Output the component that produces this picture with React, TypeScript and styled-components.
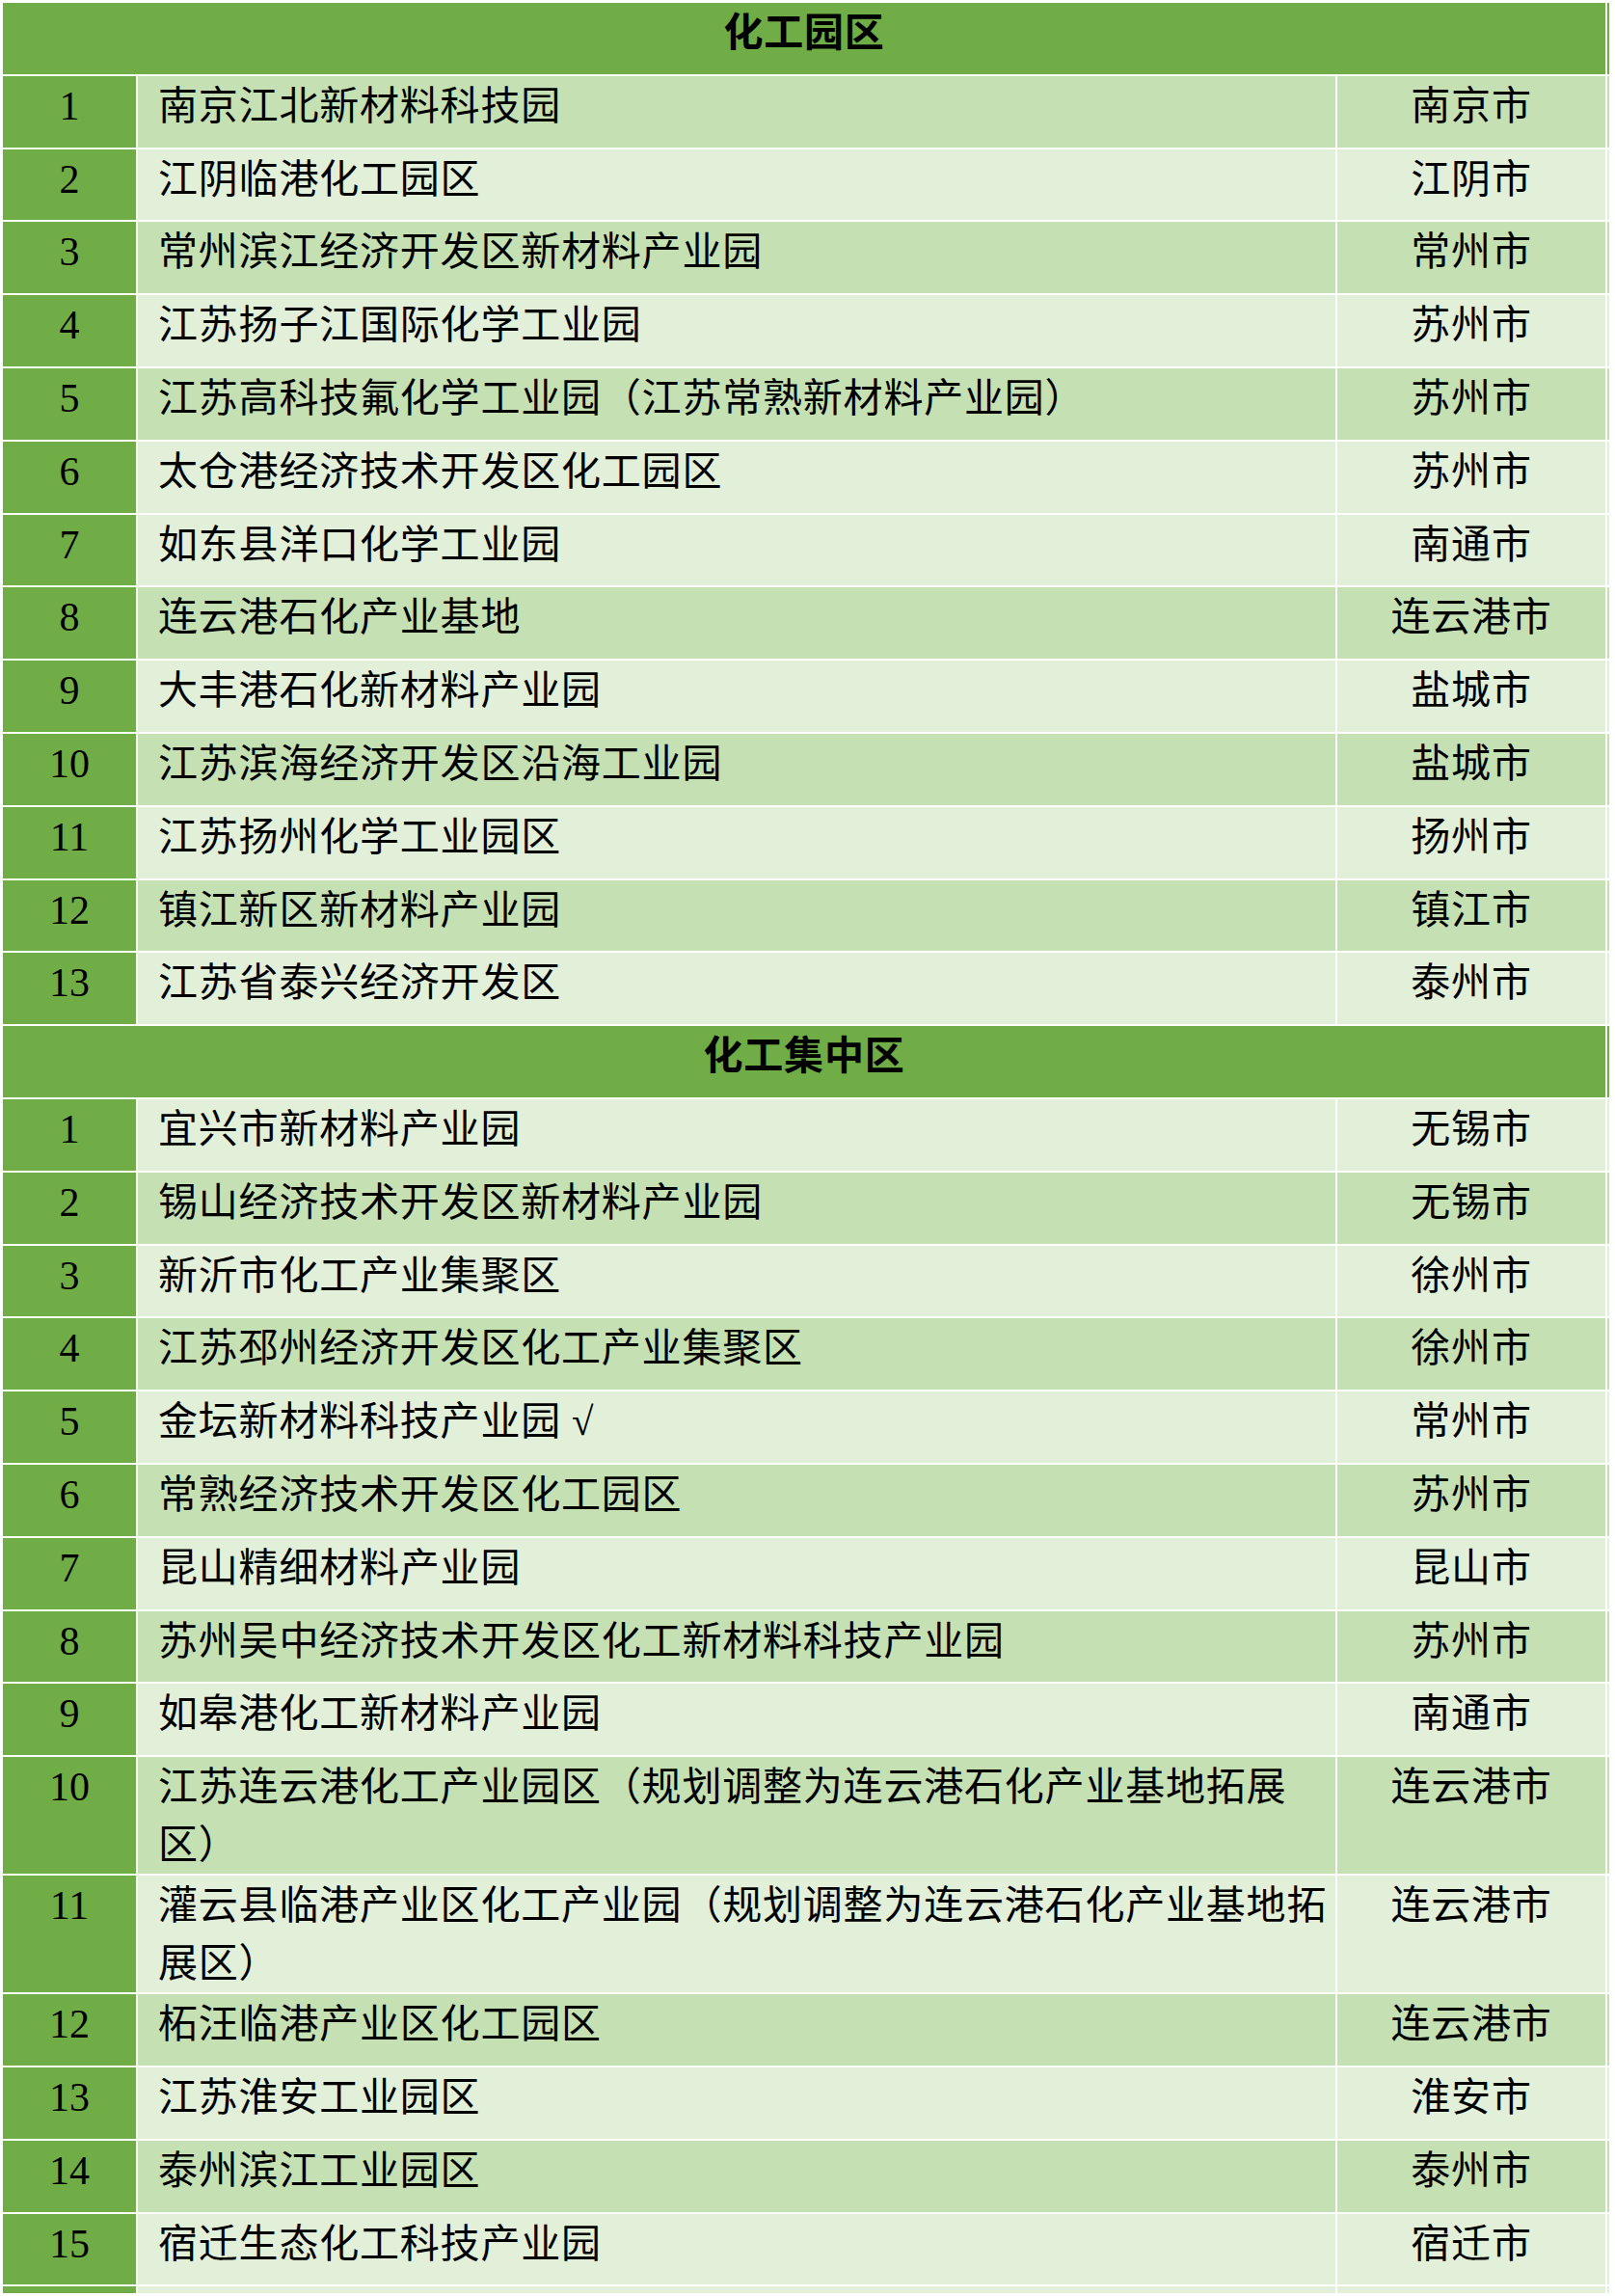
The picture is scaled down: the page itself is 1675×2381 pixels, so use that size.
import React from "react";
import styled, { createGlobalStyle } from "styled-components";

type Tone = "dark" | "light";

interface ParkRow {
  no: number;
  name: string;
  city: string;
  tone: Tone;
}

interface Section {
  title: string;
  rows: ParkRow[];
}

const GREEN = "#70ad47";
const TONES: Record<Tone, string> = {
  dark: "#c5e0b3",
  light: "#e2efd9",
};

const GlobalStyle = createGlobalStyle`
  html, body {
    margin: 0;
    padding: 0;
    background: #ffffff;
  }
  body {
    font-family: "Liberation Serif", "Noto Sans CJK SC", serif;
    color: #000000;
  }
`;

const TableWrap = styled.div`
  display: flex;
  flex-direction: column;
  gap: 2px;
  padding: 3px 0 0 3px;
  width: 1672px;
  box-sizing: border-box;
  height: 2381px;
  overflow: hidden;
`;

const Row = styled.div`
  display: grid;
  grid-template-columns: 138px 1242px 278px 1.5px;
  column-gap: 2px;
`;

const Cell = styled.div<{ $bg: string }>`
  background: ${(p) => p.$bg};
  box-sizing: border-box;
  min-height: 73.8px;
  padding-top: 1px;
  line-height: 60px;
  font-size: 41px;
  letter-spacing: 0.8px;
`;

const TitleCell = styled(Cell)`
  grid-column: 1 / 4;
  text-align: center;
  font-weight: 700;
`;

const NoCell = styled(Cell)`
  text-align: center;
  font-size: 42px;
  letter-spacing: 0;
`;

const NameCell = styled(Cell)`
  padding-left: 21px;
  white-space: pre-line;
`;

const CityCell = styled(Cell)`
  text-align: center;
`;

const Edge = styled.div<{ $bg: string }>`
  background: ${(p) => p.$bg};
`;

const Tail = styled(Row)`
  height: 7px;
`;

const seq = (s: string): Tone[] =>
  s.split("").map((c) => (c === "d" ? "dark" : "light"));

const build = (items: [string, string][], tones: Tone[]): ParkRow[] =>
  items.map(([name, city], i) => ({ no: i + 1, name, city, tone: tones[i] }));

const sections: Section[] = [
  {
    title: "化工园区",
    rows: build(
      [
        ["南京江北新材料科技园", "南京市"],
        ["江阴临港化工园区", "江阴市"],
        ["常州滨江经济开发区新材料产业园", "常州市"],
        ["江苏扬子江国际化学工业园", "苏州市"],
        ["江苏高科技氟化学工业园（江苏常熟新材料产业园）", "苏州市"],
        ["太仓港经济技术开发区化工园区", "苏州市"],
        ["如东县洋口化学工业园", "南通市"],
        ["连云港石化产业基地", "连云港市"],
        ["大丰港石化新材料产业园", "盐城市"],
        ["江苏滨海经济开发区沿海工业园", "盐城市"],
        ["江苏扬州化学工业园区", "扬州市"],
        ["镇江新区新材料产业园", "镇江市"],
        ["江苏省泰兴经济开发区", "泰州市"],
      ],
      seq("dldldlldldldl")
    ),
  },
  {
    title: "化工集中区",
    rows: build(
      [
        ["宜兴市新材料产业园", "无锡市"],
        ["锡山经济技术开发区新材料产业园", "无锡市"],
        ["新沂市化工产业集聚区", "徐州市"],
        ["江苏邳州经济开发区化工产业集聚区", "徐州市"],
        ["金坛新材料科技产业园 √", "常州市"],
        ["常熟经济技术开发区化工园区", "苏州市"],
        ["昆山精细材料产业园", "昆山市"],
        ["苏州吴中经济技术开发区化工新材料科技产业园", "苏州市"],
        ["如皋港化工新材料产业园", "南通市"],
        ["江苏连云港化工产业园区（规划调整为连云港石化产业基地拓展\n区）", "连云港市"],
        ["灌云县临港产业区化工产业园（规划调整为连云港石化产业基地拓\n展区）", "连云港市"],
        ["柘汪临港产业区化工园区", "连云港市"],
        ["江苏淮安工业园区", "淮安市"],
        ["泰州滨江工业园区", "泰州市"],
        ["宿迁生态化工科技产业园", "宿迁市"],
      ],
      seq("ldldldldldldldl")
    ),
  },
];

const App: React.FC = () => {
  return (
    <>
      <GlobalStyle />
      <TableWrap>
        {sections.map((section) => (
          <React.Fragment key={section.title}>
            <Row>
              <TitleCell $bg={GREEN}>{section.title}</TitleCell>
              <Edge $bg={GREEN} />
            </Row>
            {section.rows.map((row) => (
              <Row key={section.title + row.no}>
                <NoCell $bg={GREEN}>{row.no}</NoCell>
                <NameCell $bg={TONES[row.tone]}>{row.name}</NameCell>
                <CityCell $bg={TONES[row.tone]}>{row.city}</CityCell>
                <Edge $bg={TONES[row.tone]} />
              </Row>
            ))}
          </React.Fragment>
        ))}
        <Tail>
          <Edge $bg={GREEN} />
          <Edge $bg={TONES.light} />
          <Edge $bg={TONES.light} />
          <Edge $bg={TONES.light} />
        </Tail>
      </TableWrap>
    </>
  );
};

export default App;
